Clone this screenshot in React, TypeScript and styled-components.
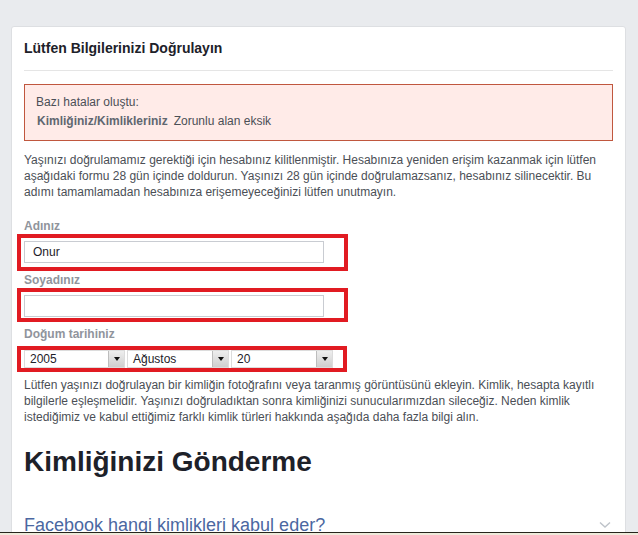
import styled, { createGlobalStyle } from 'styled-components'

const GlobalStyle = createGlobalStyle`
  html, body {
    margin: 0;
    padding: 0;
    background: #e9ebee;
    font-family: "Liberation Sans", Arial, sans-serif;
    overflow: hidden;
  }
`

const Page = styled.main`
  padding: 26px 14px 0 11px;
  height: 535px;
  box-sizing: border-box;
  overflow: hidden;
`

const Card = styled.section`
  background: #fff;
  border: 1px solid #dddfe2;
  border-radius: 3px;
  padding: 0 12px 12px;
  width: 589px;
  min-height: 520px;
`

const CardTitle = styled.h2`
  margin: 0;
  padding: 12px 0 13px;
  border-bottom: 1px solid #e5e5e5;
  font-size: 14px;
  line-height: 18px;
  font-weight: bold;
  color: #1d2129;
`

const ErrorBox = styled.div`
  margin-top: 13px;
  background: #ffebe8;
  border: 1px solid #c0573e;
  padding: 9px 11px 11px;
  font-size: 12px;
  line-height: 16px;
  color: #4b4f56;
`

const ErrorRow = styled.div`
  display: flex;
  margin-top: 3px;
  padding-left: 1px;

  b {
    color: #606770;
    margin-right: 6px;
  }
`

const Paragraph = styled.p<{ $top: number }>`
  margin: ${(p) => p.$top}px 0 0;
  font-size: 12px;
  line-height: 16px;
  color: #4b4f56;
`

const Field = styled.div<{ $top: number }>`
  margin-top: ${(p) => p.$top}px;
`

const Label = styled.label`
  display: block;
  font-size: 12px;
  line-height: 15px;
  font-weight: bold;
  color: #90949c;
`

const Highlight = styled.div<{ $gap?: number; $pad?: string }>`
  margin: ${(p) => p.$gap ?? 0}px 0 0 -7px;
  border: 4px solid #e11b22;
  padding: ${(p) => p.$pad ?? '3px 20px 4px 3px'};
  width: fit-content;
  display: flex;
  gap: 2px;
  background: #fff;
`

const TextInput = styled.div`
  width: 298px;
  height: 20px;
  border: 1px solid #c9ccd2;
  font-size: 12px;
  line-height: 20px;
  color: #1d2129;

  span {
    padding-left: 8px;
  }
`

const Select = styled.div<{ $width: number }>`
  width: ${(p) => p.$width}px;
  height: 18px;
  box-sizing: border-box;
  border: 1px solid #dcdcdc;
  display: flex;
  align-items: stretch;
  font-size: 12px;
  color: #1d2129;
`

const SelectValue = styled.span`
  flex: 1;
  padding-left: 5px;
  line-height: 16px;
`

const SelectArrow = styled.span`
  width: 15px;
  background: linear-gradient(#eeeeee, #cfcfcf);
  border-left: 1px solid #bdbdbd;
  display: flex;
  align-items: center;
  justify-content: center;

  &::after {
    content: '';
    border-left: 3.5px solid transparent;
    border-right: 3.5px solid transparent;
    border-top: 4px solid #111;
  }
`

const Heading = styled.h1`
  margin: 20px 0 0;
  font-size: 28px;
  line-height: 34px;
  font-weight: bold;
  color: #1d2129;
`

const Accordion = styled.div`
  margin-top: 35px;
  display: flex;
  align-items: center;
  justify-content: space-between;
  padding-right: 2px;
`

const AccordionLink = styled.a`
  font-size: 18px;
  line-height: 22px;
  color: #4b67a1;
  text-decoration: none;
`

const BottomEdge = styled.div`
  position: fixed;
  left: 0;
  right: 0;
  bottom: 0;
  height: 2px;
  background: #efeadb;
  border-top: 1px solid #26251c;
`

function Chevron() {
  return (
    <svg width="12" height="8" viewBox="0 0 12 8">
      <polyline points="1,1.5 6,6 11,1.5" fill="none" stroke="#bec3c9" strokeWidth="1.4" />
    </svg>
  )
}

function DateSelect({ value, width }: { value: string; width: number }) {
  return (
    <Select $width={width}>
      <SelectValue>{value}</SelectValue>
      <SelectArrow />
    </Select>
  )
}

export default function App() {
  return (
    <>
      <GlobalStyle />
      <Page>
        <Card>
          <CardTitle>Lütfen Bilgilerinizi Doğrulayın</CardTitle>
          <ErrorBox>
            <div>Bazı hatalar oluştu:</div>
            <ErrorRow>
              <b>Kimliğiniz/Kimlikleriniz</b>
              <span>Zorunlu alan eksik</span>
            </ErrorRow>
          </ErrorBox>
          <Paragraph $top={11}>
            Yaşınızı doğrulamamız gerektiği için hesabınız kilitlenmiştir. Hesabınıza yeniden erişim kazanmak için lütfen
            aşağıdaki formu 28 gün içinde doldurun. Yaşınızı 28 gün içinde doğrulamazsanız, hesabınız silinecektir. Bu
            adımı tamamlamadan hesabınıza erişemeyeceğinizi lütfen unutmayın.
          </Paragraph>
          <Field $top={19}>
            <Label>Adınız</Label>
            <Highlight>
              <TextInput>
                <span>Onur</span>
              </TextInput>
            </Highlight>
          </Field>
          <Field $top={2}>
            <Label>Soyadınız</Label>
            <Highlight $pad="3px 20px 1px 3px">
              <TextInput />
            </Highlight>
          </Field>
          <Field $top={5}>
            <Label>Doğum tarihiniz</Label>
            <Highlight $gap={4} $pad="0 10px 0 3px">
              <DateSelect value="2005" width={101} />
              <DateSelect value="Ağustos" width={102} />
              <DateSelect value="20" width={102} />
            </Highlight>
          </Field>
          <Paragraph $top={5}>
            Lütfen yaşınızı doğrulayan bir kimliğin fotoğrafını veya taranmış görüntüsünü ekleyin. Kimlik, hesapta kayıtlı
            bilgilerle eşleşmelidir. Yaşınızı doğruladıktan sonra kimliğinizi sunucularımızdan sileceğiz. Neden kimlik
            istediğimiz ve kabul ettiğimiz farklı kimlik türleri hakkında aşağıda daha fazla bilgi alın.
          </Paragraph>
          <Heading>Kimliğinizi Gönderme</Heading>
          <Accordion>
            <AccordionLink href="#">Facebook hangi kimlikleri kabul eder?</AccordionLink>
            <Chevron />
          </Accordion>
        </Card>
      </Page>
      <BottomEdge />
    </>
  )
}
